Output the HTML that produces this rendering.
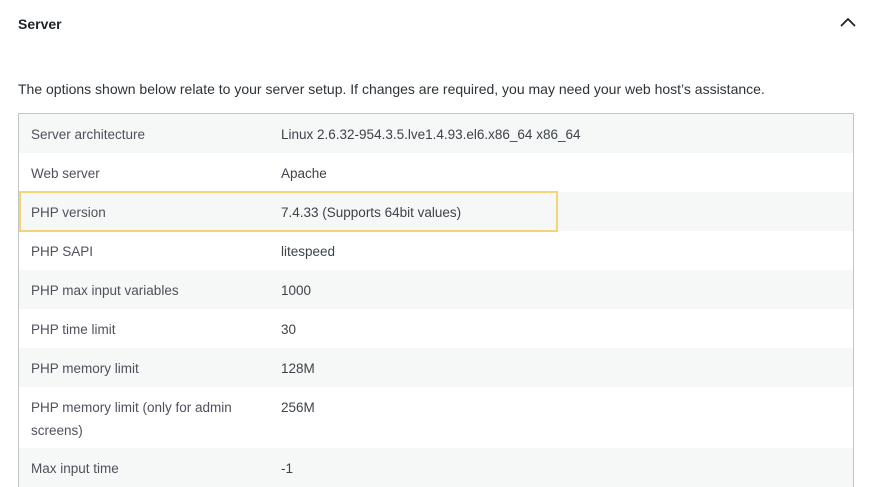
<!DOCTYPE html>
<html><head><meta charset="utf-8"><style>
*{margin:0;padding:0;box-sizing:border-box}
html,body{width:872px;height:487px;overflow:hidden}
body{background:#fff;font-family:"Liberation Sans",sans-serif;color:#1d2327;position:relative}
.h{position:absolute;left:18px;top:16px;font-size:14px;font-weight:600;color:#1d2327}
.chev{position:absolute;left:839px;top:15px}
.p{position:absolute;left:18px;top:81px;font-size:14px;color:#2c3338}
.t{position:absolute;left:18px;top:113px;width:836px;height:374px;border:1px solid #c3c4c7;border-bottom:none;overflow:hidden}
.r{position:absolute;left:0;width:834px;font-size:13.5px;line-height:23px}
.r.g{background:#f6f7f7}
.l{position:absolute;left:12px;top:9px;width:230px;color:#50505c}
.v{position:absolute;left:262px;top:9px;color:#3c434a}
.hl{position:absolute;left:19px;top:191px;width:539px;height:41px;border:2px solid #f2d675}
</style></head><body>
<div class="h">Server</div>
<svg class="chev" width="18" height="14" viewBox="0 0 18 14"><path d="M2 11 L9 4 L16 11" fill="none" stroke="#1d2327" stroke-width="1.8"/></svg>
<div class="p">The options shown below relate to your server setup. If changes are required, you may need your web host’s assistance.</div>
<div class="t">
<div class="r g" style="top:0;height:39px"><div class="l">Server architecture</div><div class="v">Linux 2.6.32-954.3.5.lve1.4.93.el6.x86_64 x86_64</div></div>
<div class="r" style="top:39px;height:39px"><div class="l">Web server</div><div class="v">Apache</div></div>
<div class="r g" style="top:78px;height:39px"><div class="l">PHP version</div><div class="v">7.4.33 (Supports 64bit values)</div></div>
<div class="r" style="top:117px;height:39px"><div class="l">PHP SAPI</div><div class="v">litespeed</div></div>
<div class="r g" style="top:156px;height:39px"><div class="l">PHP max input variables</div><div class="v">1000</div></div>
<div class="r" style="top:195px;height:39px"><div class="l">PHP time limit</div><div class="v">30</div></div>
<div class="r g" style="top:234px;height:39px"><div class="l">PHP memory limit</div><div class="v">128M</div></div>
<div class="r" style="top:273px;height:61px"><div class="l">PHP memory limit (only for admin screens)</div><div class="v">256M</div></div>
<div class="r g" style="top:334px;height:60px"><div class="l">Max input time</div><div class="v">-1</div></div>
</div>
<div class="hl"></div>
</body></html>
